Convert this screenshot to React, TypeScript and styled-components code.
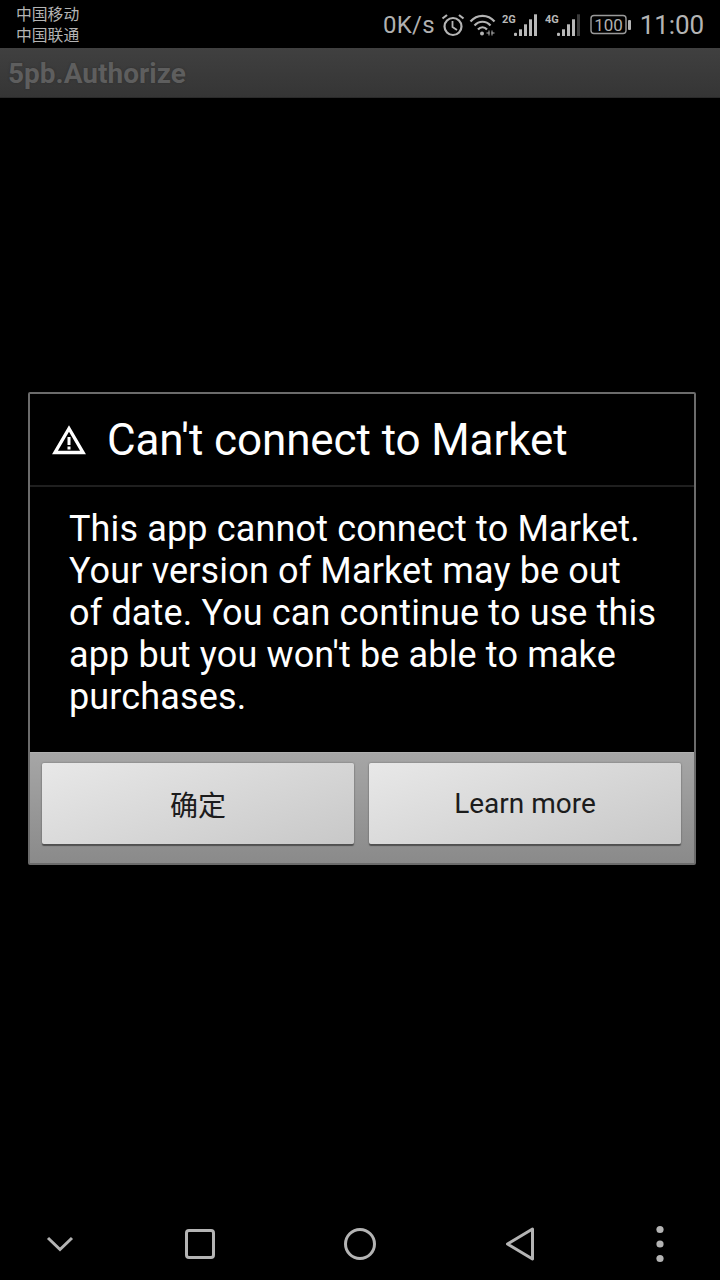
import React from "react";
import styled, { createGlobalStyle } from "styled-components";

const Global = createGlobalStyle`
  html, body { margin: 0; padding: 0; background: #000; }
  #root { width: 720px; }
`;
const Page = styled.div`
  width: 720px; height: 1280px; display: flex; flex-direction: column; overflow: hidden;
  background: #000; font-family: Roboto, "Noto Sans CJK SC", sans-serif;
`;
const StatusBar = styled.div`
  height: 48px; display: flex; justify-content: space-between; align-items: center;
  padding: 0 16px; box-sizing: border-box; color: #b4b4b4;
`;
const Carriers = styled.div`
  display: flex; flex-direction: column; font: 15.8px/21px "Noto Sans CJK SC", sans-serif; color: #b4b4b4;
`;
const StatusRight = styled.div`
  display: flex; align-items: center;
`;
const Speed = styled.span`
  font-size: 24px; line-height: 48px; color: #b0b0b0; margin: 2px 6px 0 0; letter-spacing: 0.2px;
`;
const Clock = styled.span`
  font-size: 26px; line-height: 48px; color: #b4b4b4; margin: 2px 0 0 9px; letter-spacing: -0.1px;
`;
const StatusIcon = styled.svg<{ $gap?: number }>`
  display: block; flex: none; margin-right: ${(p) => p.$gap ?? 0}px; margin-top: 1px;
`;
const TitleBar = styled.div`
  height: 50px; box-sizing: border-box; padding-left: 8px; display: flex; align-items: center;
  background: linear-gradient(#404040, #353535); border-bottom: 1px solid #2a2a2a;
`;
const AppTitle = styled.div`
  font-size: 28px; font-weight: 700; color: #5e5e5e; margin-top: 1px; text-shadow: 0 0 2px #2c2c2c;
`;
const Content = styled.div`
  flex: 1; padding: 294px 24px 0 28px;
`;
const Dialog = styled.div`
  width: 668px; height: 473px; box-sizing: border-box; display: flex; flex-direction: column;
  border: 2px solid #6b6b6b; background: #000; border-radius: 2px;
`;
const DialogHead = styled.div`
  height: 93px; box-sizing: border-box; display: flex; align-items: center; padding-left: 22px; gap: 21px;
  border-bottom: 2px solid #1f1f1f;
`;
const DialogTitle = styled.div`
  font-size: 44px; color: #fff; letter-spacing: -0.1px;
`;
const DialogBody = styled.div`
  flex: 1; padding: 21px 20px 0 39px; font-size: 36px; line-height: 42px; color: #fff; white-space: nowrap;
  letter-spacing: 0.14px;
`;
const ButtonPanel = styled.div`
  height: 111px; box-sizing: border-box; padding: 10px 12px 0; display: flex; gap: 15px;
  background: linear-gradient(#a6a6a6, #8a8a8a); border-top: 1px solid #b0b0b0;
`;
const DialogButton = styled.button`
  width: 312px; height: 81px; padding: 0; border: 0; border-radius: 2px;
  background: linear-gradient(160deg, #e8e8e8, #c8c8c8); box-shadow: 0 2px 1px #505050, 0 0 2px #666;
  font-family: Roboto, "Noto Sans CJK SC", sans-serif; font-size: 28px; color: #1c1c1c;
`;
const NavBar = styled.div`
  height: 72px; display: grid; grid-template-columns: 120px 160px 160px 160px 120px;
  align-items: center; justify-items: center;
`;
const NavIcon = styled.svg`
  display: block; fill: none; stroke: #b4b4b4; stroke-width: 3;
`;

const Bars = ({ label, dim }: { label: string; dim?: boolean }) => (
  <StatusIcon width="36" height="24" viewBox="0 0 36 24" $gap={dim ? 8 : 7}>
    <text x="0" y="10" fontFamily="Roboto" fontSize="11" fontWeight="700" fill="#b8b8b8">{label}</text>
    <rect x="12" y="19.7" width="3" height="3.3" rx="1" fill="#b8b8b8" />
    <rect x="17" y="16.3" width="3" height="6.7" fill="#b8b8b8" />
    <rect x="22" y="11.3" width="3" height="11.7" fill="#b8b8b8" />
    <rect x="27" y="6.3" width="3" height="16.7" fill="#b8b8b8" />
    <rect x="32" y="1.3" width="3" height="21.7" fill={dim ? "#3a3a3a" : "#b8b8b8"} />
  </StatusIcon>
);

export default function App() {
  return (
    <Page>
      <Global />
      <StatusBar>
        <Carriers><span>中国移动</span><span>中国联通</span></Carriers>
        <StatusRight>
          <Speed>0K/s</Speed>
          <StatusIcon width="24" height="24" viewBox="0 0 24 24" fill="none" stroke="#b4b4b4" $gap={4}>
            <circle cx="12" cy="13.5" r="8.5" strokeWidth="2.2" />
            <path d="M11.5 8v6l4.5 3" strokeWidth="1.8" />
            <path d="M1.5 5.5 6 2M22.5 5.5 18 2" strokeWidth="2.2" />
          </StatusIcon>
          <StatusIcon width="28" height="24" viewBox="0 0 28 24" fill="none" stroke="#b4b4b4" strokeWidth="2.2" $gap={5}>
            <path d="M1.5 8.5C8 1 19 1 25.5 8.5" />
            <path d="M5.5 12.5C10 7.5 17 7.5 21.5 12.5" />
            <path d="M9 16.5C11.5 13.5 15.5 13.5 18 16.5" />
            <circle cx="13" cy="20.5" r="2" fill="#b4b4b4" stroke="none" />
            <path d="M20 17.5v5M23 17.5v5" strokeWidth="1" />
            <path d="M17.5 20h3M22.5 20h3" strokeWidth="1" />
          </StatusIcon>
          <Bars label="2G" />
          <Bars label="4G" dim />
          <StatusIcon width="42" height="24" viewBox="0 0 42 24">
            <rect x="2" y="2.5" width="35" height="18" rx="3" fill="none" stroke="#9a9a9a" strokeWidth="1.4" />
            <rect x="39" y="7" width="3" height="10" rx="1" fill="#b4b4b4" />
            <text x="19.5" y="18" textAnchor="middle" fontFamily="Roboto" fontSize="17" fill="#b0b0b0">100</text>
          </StatusIcon>
          <Clock>11:00</Clock>
        </StatusRight>
      </StatusBar>
      <TitleBar><AppTitle>5pb.Authorize</AppTitle></TitleBar>
      <Content>
        <Dialog>
          <DialogHead>
            <svg width="34" height="30" viewBox="0 0 34 30" fill="none">
              <path d="M17 3.5 L31 27.5 H3 Z" stroke="#fff" strokeWidth="3.4" />
              <path d="M17 12v8" stroke="#fff" strokeWidth="3" />
              <rect x="15.5" y="21.5" width="3" height="3" fill="#fff" />
            </svg>
            <DialogTitle>Can't connect to Market</DialogTitle>
          </DialogHead>
          <DialogBody>
            This app cannot connect to Market.<br />
            Your version of Market may be out<br />
            of date. You can continue to use this<br />
            app but you won't be able to make<br />
            purchases.
          </DialogBody>
          <ButtonPanel>
            <DialogButton>确定</DialogButton>
            <DialogButton>Learn more</DialogButton>
          </ButtonPanel>
        </Dialog>
      </Content>
      <NavBar>
        <NavIcon width="32" height="32" viewBox="0 0 32 32"><path d="M4 10 16 21.5 28 10" /></NavIcon>
        <NavIcon width="30" height="30" viewBox="0 0 30 30"><rect x="1.5" y="1.5" width="27" height="27" rx="2.5" /></NavIcon>
        <NavIcon width="36" height="36" viewBox="0 0 36 36"><circle cx="18" cy="18" r="14.5" /></NavIcon>
        <NavIcon width="32" height="36" viewBox="0 0 32 36" strokeLinejoin="round"><path d="M28.5 3 3.5 18l25 15Z" /></NavIcon>
        <svg width="32" height="40" viewBox="0 0 32 40" fill="#b4b4b4"><circle cx="16" cy="5.5" r="3.6" /><circle cx="16" cy="20" r="3.6" /><circle cx="16" cy="34.5" r="3.6" /></svg>
      </NavBar>
    </Page>
  );
}
